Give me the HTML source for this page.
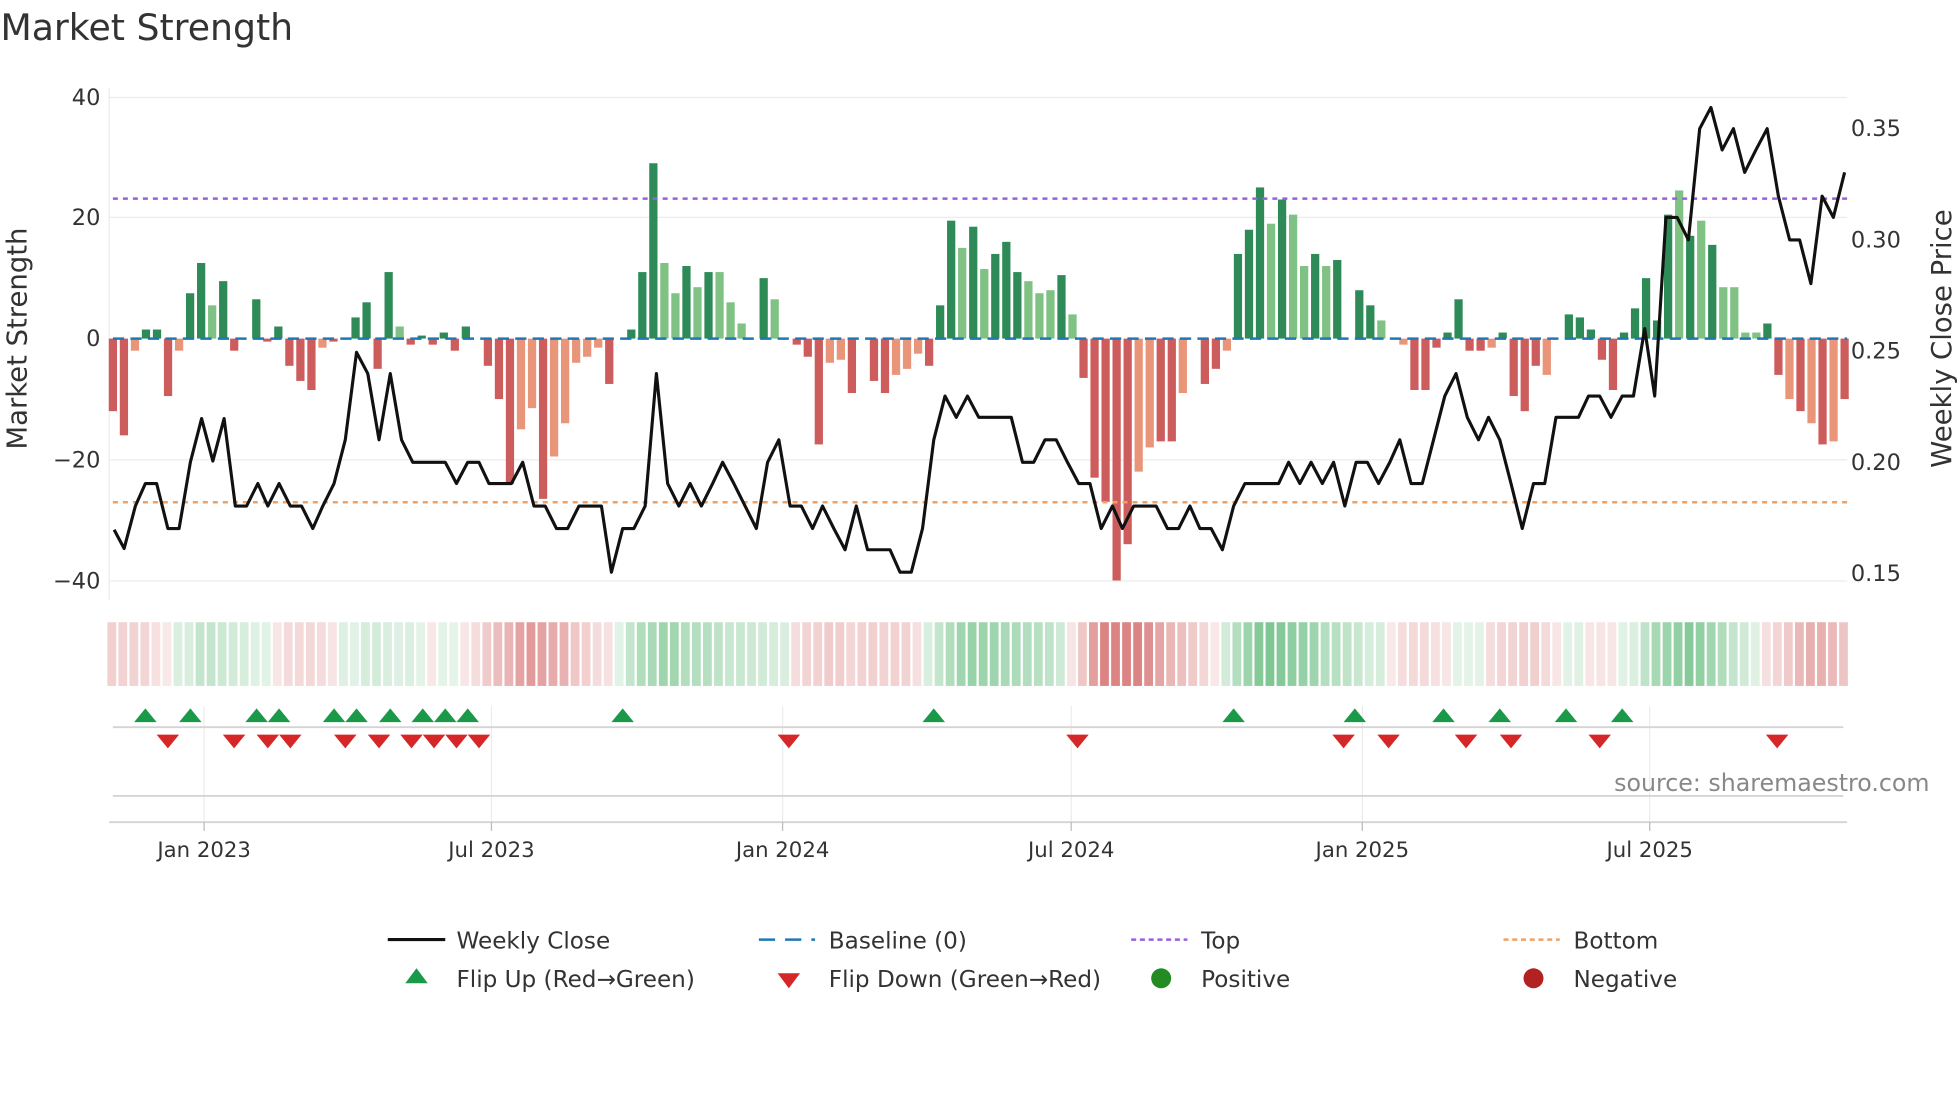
<!DOCTYPE html>
<html><head><meta charset="utf-8"><style>
html,body{margin:0;padding:0;background:#fff;}
svg{display:block;font-family:"DejaVu Sans","Liberation Sans",sans-serif;}
</style></head><body>
<svg id="s" width="1960" height="1102" viewBox="0 0 1568 882" xmlns="http://www.w3.org/2000/svg">
<rect width="1568" height="882" fill="#fff"/>
<text x="0" y="32" font-size="29" fill="#333">Market Strength</text>
<g stroke="#ececec" stroke-width="1">
<line x1="87" y1="78" x2="1478" y2="78"/><line x1="87" y1="174" x2="1478" y2="174"/>
<line x1="87" y1="368" x2="1478" y2="368"/><line x1="87" y1="465" x2="1478" y2="465"/>
<line x1="87" y1="70" x2="87" y2="480"/>
<line x1="163" y1="565" x2="163" y2="658"/><line x1="393" y1="565" x2="393" y2="658"/>
<line x1="626" y1="565" x2="626" y2="658"/><line x1="857" y1="565" x2="857" y2="658"/>
<line x1="1090" y1="565" x2="1090" y2="658"/><line x1="1320" y1="565" x2="1320" y2="658"/>
</g>
<g stroke="#d4d4d4" stroke-width="1.5">
<line x1="90" y1="582" x2="1475" y2="582"/><line x1="90" y1="637" x2="1475" y2="637"/>
<line x1="87" y1="658" x2="1478" y2="658"/>
</g>
<g stroke="#bbb" stroke-width="1">
<line x1="163" y1="658" x2="163" y2="665"/><line x1="393" y1="658" x2="393" y2="665"/><line x1="626" y1="658" x2="626" y2="665"/><line x1="857" y1="658" x2="857" y2="665"/><line x1="1090" y1="658" x2="1090" y2="665"/><line x1="1320" y1="658" x2="1320" y2="665"/>
</g>
<g id="bars"></g>
<line x1="90" y1="271" x2="1478" y2="271" stroke="#1f77b4" stroke-width="2" stroke-dasharray="9,5"/>
<line x1="90" y1="159" x2="1478" y2="159" stroke="#9b5fdc" stroke-width="2" stroke-dasharray="4,4"/>
<line x1="90" y1="402" x2="1478" y2="402" stroke="#f0a060" stroke-width="2" stroke-dasharray="4,4"/>
<polyline id="price" fill="none" stroke="#111" stroke-width="2.5" stroke-linejoin="round"/>
<g id="strip"></g>
<g id="marks"></g>
<g font-size="18" fill="#333" text-anchor="end">
<text x="80" y="84">40</text><text x="80" y="180">20</text><text x="80" y="277">0</text><text x="80" y="374">−20</text><text x="80" y="471">−40</text>
</g>
<g font-size="18" fill="#333">
<text x="1481" y="109">0.35</text><text x="1481" y="198">0.30</text><text x="1481" y="287">0.25</text><text x="1481" y="376">0.20</text><text x="1481" y="465">0.15</text>
</g>
<text transform="translate(21,271) rotate(-90)" font-size="22" fill="#333" text-anchor="middle">Market Strength</text>
<text transform="translate(1561,271) rotate(-90)" font-size="22" fill="#333" text-anchor="middle">Weekly Close Price</text>
<g font-size="17" fill="#333" text-anchor="middle">
<text x="163" y="686">Jan 2023</text><text x="393" y="686">Jul 2023</text><text x="626" y="686">Jan 2024</text><text x="857" y="686">Jul 2024</text><text x="1090" y="686">Jan 2025</text><text x="1320" y="686">Jul 2025</text>
</g>
<text x="1544" y="633" font-size="19" fill="#888" text-anchor="end">source: sharemaestro.com</text>
<g font-size="18.5" fill="#333">
<line x1="310" y1="752" x2="356" y2="752" stroke="#111" stroke-width="2.5"/><text x="365" y="759">Weekly Close</text>
<line x1="607" y1="752" x2="652" y2="752" stroke="#1f77b4" stroke-width="2" stroke-dasharray="13,8"/><text x="663" y="759">Baseline (0)</text>
<line x1="905" y1="752" x2="950" y2="752" stroke="#9b5fdc" stroke-width="2" stroke-dasharray="4,3"/><text x="961" y="759">Top</text>
<line x1="1203" y1="752" x2="1248" y2="752" stroke="#f0a060" stroke-width="2" stroke-dasharray="4,3"/><text x="1259" y="759">Bottom</text>
<polygon points="333,775 342,787 324,787" fill="#1a9a48"/><text x="365" y="790">Flip Up (Red→Green)</text>
<polygon points="622,779 640,779 631,791" fill="#d62728"/><text x="663" y="790">Flip Down (Green→Red)</text>
<circle cx="929" cy="783" r="8" fill="#228b22"/><text x="961" y="790">Positive</text>
<circle cx="1227" cy="783" r="8" fill="#b22222"/><text x="1259" y="790">Negative</text>
</g>
</svg>
<script>
var v=[-12,-16,-2,1.5,1.5,-9.5,-2,7.5,12.5,5.5,9.5,-2,0,6.5,-0.5,2,-4.5,-7,-8.5,-1.5,-0.5,0,3.5,6,-5,11,2,-1,0.5,-1,1,-2,2,0,-4.5,-10,-24,-15,-11.5,-26.5,-19.5,-14,-4,-3,-1.5,-7.5,0,1.5,11,29,12.5,7.5,12,8.5,11,11,6,2.5,0,10,6.5,0,-1,-3,-17.5,-4,-3.5,-9,0,-7,-9,-6,-5,-2.5,-4.5,5.5,19.5,15,18.5,11.5,14,16,11,9.5,7.5,8,10.5,4,-6.5,-23,-27,-40,-34,-22,-18,-17,-17,-9,0,-7.5,-5,-2,14,18,25,19,23,20.5,12,14,12,13,0,8,5.5,3,0,-1,-8.5,-8.5,-1.5,1,6.5,-2,-2,-1.5,1,-9.5,-12,-4.5,-6,0,4,3.5,1.5,-3.5,-8.5,1,5,10,3,20.5,24.5,17,19.5,15.5,8.5,8.5,1,1,2.5,-6,-10,-12,-14,-17.5,-17,-10];
var light=new Set([2,6,9,19,26,37,38,40,41,42,43,44,50,51,53,55,56,57,60,65,66,71,72,73,77,79,83,84,85,87,93,94,97,101,105,107,108,110,115,117,125,130,131,142,144,146,147,148,149,152,154,156]);
var ns="http://www.w3.org/2000/svg",N=v.length,dx=(1476-90)/(N-1);
var bars=document.getElementById('bars'),strip=document.getElementById('strip');
function el(t,a,p){var e=document.createElementNS(ns,t);for(var k in a)e.setAttribute(k,a[k]);p.appendChild(e);return e;}
for(var i=0;i<N;i++){var x=90+i*dx,val=v[i],h=Math.abs(val)*4.84;
 if(val!==0){var c=val>0?(light.has(i)?'#7fc283':'#2e8b57'):(light.has(i)?'#e8957a':'#cd5c5c');
 el('rect',{x:x-3.3,y:val>0?271-h:271,width:6.6,height:Math.max(h,1),fill:c},bars);}
 var s=0;for(var j=Math.max(0,i-2);j<=Math.min(N-1,i+2);j++)s+=v[j];s/=5;
 var a=Math.min(1,0.18+Math.abs(s)/30);
 var sc=s>=0?'rgba(60,170,90,'+(a*0.75)+')':'rgba(205,80,80,'+(a*0.7)+')';
 el('rect',{x:x-4.4,y:498,width:dx-1.8,height:51,fill:sc},strip);}
var p=[[91,424],[99,439],[108,405],[116,387],[125,387],[134,423],[143,423],[152,370],[161,335],[170,369],[179,335],[188,405],[197,405],[206,387],[214,405],[223,387],[232,405],[241,405],[250,423],[258,405],[267,387],[276,352],[285,282],[294,299],[303,352],[312,299],[321,352],[330,370],[338,370],[347,370],[356,370],[365,387],[374,370],[383,370],[391,387],[400,387],[409,387],[418,370],[427,405],[436,405],[445,423],[454,423],[463,405],[472,405],[481,405],[489,458],[498,423],[507,423],[516,405],[525,299],[534,387],[543,405],[552,387],[561,405],[570,387],[578,370],[587,387],[596,405],[605,423],[614,370],[623,352],[632,405],[641,405],[650,423],[658,405],[667,423],[676,440],[685,405],[694,440],[703,440],[712,440],[720,458],[729,458],[738,423],[747,352],[756,317],[765,334],[774,317],[783,334],[792,334],[800,334],[809,334],[818,370],[827,370],[836,352],[845,352],[854,370],[863,387],[872,387],[881,423],[890,405],[898,423],[907,405],[916,405],[925,405],[934,423],[943,423],[952,405],[960,423],[969,423],[978,440],[987,405],[996,387],[1005,387],[1014,387],[1023,387],[1031,370],[1040,387],[1049,370],[1058,387],[1067,370],[1076,405],[1085,370],[1094,370],[1103,387],[1112,370],[1120,352],[1129,387],[1138,387],[1147,352],[1156,317],[1165,299],[1174,334],[1183,352],[1191,334],[1200,352],[1209,387],[1218,423],[1227,387],[1236,387],[1245,334],[1254,334],[1263,334],[1271,317],[1280,317],[1289,334],[1298,317],[1307,317],[1316,263],[1324,317],[1333,174],[1342,174],[1351,192],[1360,103],[1369,86],[1378,120],[1387,103],[1396,138],[1405,120],[1414,103],[1423,157],[1432,192],[1440,192],[1449,227],[1458,157],[1467,174],[1476,138]];
document.getElementById('price').setAttribute('points',p.map(function(q){return q.join(',')}).join(' '));
var m=document.getElementById('marks');
[116,152,205,223,267,285,312,338,356,374,498,747,987,1084,1155,1200,1253,1298].forEach(function(x){el('polygon',{points:x+',567 '+(x+9)+',578 '+(x-9)+',578',fill:'#1a9a48'},m);});
[134,187,214,232,276,303,329,347,365,383,631,862,1075,1111,1173,1209,1280,1422].forEach(function(x){el('polygon',{points:(x-9)+',588 '+(x+9)+',588 '+x+',599',fill:'#d62728'},m);});
</script>
</body></html>
